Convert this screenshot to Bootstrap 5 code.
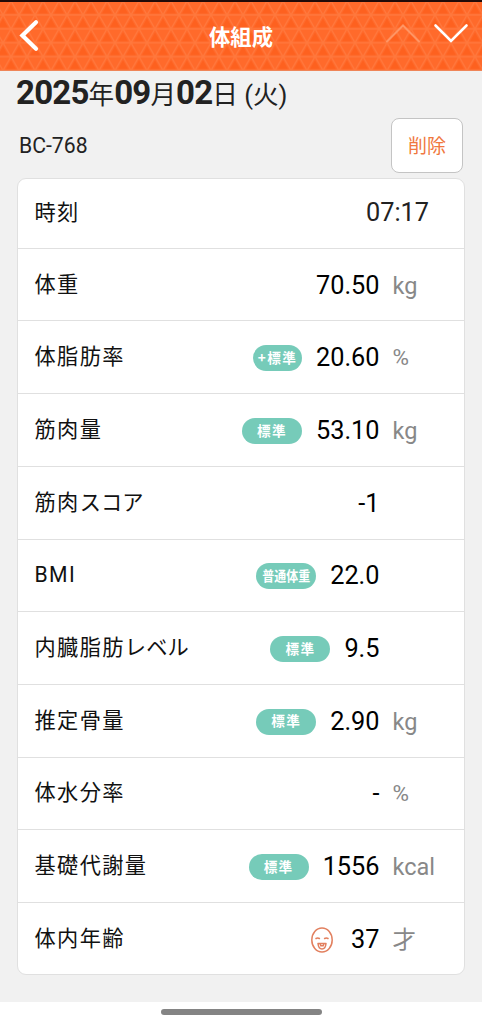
<!DOCTYPE html>
<html lang="ja">
<head>
<meta charset="utf-8">
<meta name="viewport" content="width=device-width, initial-scale=1">
<title>体組成</title>
<link href="https://cdn.jsdelivr.net/npm/bootstrap@5.3.0/dist/css/bootstrap.min.css" rel="stylesheet">
<style>
  body { font-family: Roboto, "Noto Sans CJK JP", sans-serif; background: #f1f1f1; color: #222; height: 1024px; overflow: hidden; }
  .topbar { height: 71px; border-top: 2px solid #210b08; border-bottom: 1px solid #ef8558; background: #ff6a2b; }
  .topbar-title { font-size: 21.3px; line-height: 1; color: #fff; }
  .date-row { height: 47px; padding: 3px 0 0 16px; font-size: 25.6px; line-height: 40px; }
  .date-row b { font-size: 33px; line-height: 38px; font-weight: 700; letter-spacing: -.8px; }
  .device-row { height: 59.5px; padding: 0 19px; }
  .device { font-size: 21.2px; line-height: 55px; }
  .btn-del { width: 72px; height: 55px; padding: 4px 0 0; border: 1.5px solid #c4c4c4; border-radius: 8px; background: #fff; color: #f07840; font-size: 19px; }
  .measures { margin: 0 17px; border: 1.5px solid #e0e0e0; border-radius: 9px; --bs-list-group-border-radius: 9px; background: #fff; }
  .measure { height: 72.7px; padding: 2px 0 0 16.5px; border: 0; border-bottom: 1.5px solid #e0e0e0; background: transparent; color: #000; }
  .measure:first-child { height: 70.3px; padding-top: 0; }
  .measure:last-child { border-bottom: 0; height: 71.2px; }
  .m-label { font-size: 21.2px; letter-spacing: 1.4px; line-height: 30px; margin-bottom: 2px; color: #111; }
  .measure:first-child .m-label { margin-bottom: 0; }
  .kana { letter-spacing: .1px; }
  .m-value { font-size: 25.3px; line-height: 30px; }
  .m-unit { width: 71.5px; margin-left: 13px; font-size: 23.5px; line-height: 30px; color: #888; }
  .m-unit.pct { font-size: 22.5px; margin-bottom: 2px; }
  .time { margin-right: 35px; color: #222; }
  .rating { width: 60px; height: 26px; padding: 0 0 1px; margin-right: 14px; border-radius: 13px; background: #76cbb9; color: #fff; font: bold 13.6px/1 "Noto Sans CJK JP", sans-serif; letter-spacing: 1.4px; }
  .rating.plus { width: 49px; }
  .rating.narrow { letter-spacing: 0; }
  .rating.narrow span { transform: scaleX(.88); white-space: nowrap; }
  .face { margin-right: 17px; }
  .homebar { height: 22px; background: #fff; }
  .homebar div { width: 161px; height: 6px; margin-bottom: 2px; background: #848484; }
</style>
</head>
<body class="d-flex flex-column">
<header class="topbar position-relative flex-shrink-0">
  <svg class="d-block position-absolute top-0 start-0" width="482" height="68">
    <defs>
      <pattern id="tri" width="16" height="27.8" patternUnits="userSpaceOnUse" patternTransform="translate(3 -1)">
        <path d="M8 3.5l5 8.8H3zM0 17.4l5 8.8H0zM16 17.4v8.8h-5z" fill="#fe611f"/>
        <path d="M0 0H16M0 13.9H16M0 27.8H16M0 13.9L8 0L16 13.9M0 13.9L8 27.8L16 13.9" fill="none" stroke="#ff783d" stroke-width="1.3"/>
      </pattern>
    </defs>
    <rect width="482" height="68" fill="url(#tri)"/>
  </svg>
  <svg class="position-absolute top-0 start-0" width="482" height="68" fill="none" stroke="#fff" stroke-linecap="round">
    <path d="M36 20.3L22.4 33.5L36 46.7" stroke-width="4.2"/>
    <path d="M387 39.5L403 23.5L419 39.5" stroke="#ff9564" stroke-width="2"/>
    <path d="M435.5 23.5L451 39L466.5 23.5" stroke-width="2.6"/>
  </svg>
  <div class="position-relative h-100 d-flex justify-content-center align-items-center pt-1">
    <h1 class="topbar-title fw-bold mb-0 pt-1 pb-1">体組成</h1>
  </div>
</header>
<main class="flex-grow-1">
  <div class="date-row"><b>2025</b>年<b>09</b>月<b>02</b>日 (火)</div>
  <div class="device-row d-flex justify-content-between">
    <span class="device">BC-768</span>
    <button class="btn btn-del" type="button">削除</button>
  </div>
  <ul class="list-group measures">
    <li class="list-group-item measure d-flex align-items-center"><span class="m-label me-auto">時刻</span><span class="m-value time">07:17</span></li>
    <li class="list-group-item measure d-flex align-items-center"><span class="m-label me-auto">体重</span><span class="m-value">70.50</span><span class="m-unit">kg</span></li>
    <li class="list-group-item measure d-flex align-items-center"><span class="m-label me-auto">体脂肪率</span><span class="rating plus d-flex align-items-center justify-content-center">+標準</span><span class="m-value">20.60</span><span class="m-unit pct">%</span></li>
    <li class="list-group-item measure d-flex align-items-center"><span class="m-label me-auto">筋肉量</span><span class="rating d-flex align-items-center justify-content-center">標準</span><span class="m-value">53.10</span><span class="m-unit">kg</span></li>
    <li class="list-group-item measure d-flex align-items-center"><span class="m-label me-auto">筋肉<span class="kana">スコア</span></span><span class="m-value">-1</span><span class="m-unit"></span></li>
    <li class="list-group-item measure d-flex align-items-center"><span class="m-label me-auto">BMI</span><span class="rating narrow d-flex align-items-center justify-content-center"><span>普通体重</span></span><span class="m-value">22.0</span><span class="m-unit"></span></li>
    <li class="list-group-item measure d-flex align-items-center"><span class="m-label me-auto">内臓脂肪<span class="kana">レベル</span></span><span class="rating d-flex align-items-center justify-content-center">標準</span><span class="m-value">9.5</span><span class="m-unit"></span></li>
    <li class="list-group-item measure d-flex align-items-center"><span class="m-label me-auto">推定骨量</span><span class="rating d-flex align-items-center justify-content-center">標準</span><span class="m-value">2.90</span><span class="m-unit">kg</span></li>
    <li class="list-group-item measure d-flex align-items-center"><span class="m-label me-auto">体水分率</span><span class="m-value">-</span><span class="m-unit pct">%</span></li>
    <li class="list-group-item measure d-flex align-items-center"><span class="m-label me-auto">基礎代謝量</span><span class="rating d-flex align-items-center justify-content-center">標準</span><span class="m-value">1556</span><span class="m-unit">kcal</span></li>
    <li class="list-group-item measure d-flex align-items-center"><span class="m-label me-auto">体内年齢</span>
      <svg class="face" width="24" height="28" viewBox="0 0 24 28" fill="none" stroke="#e2805f" stroke-width="1.5" stroke-linecap="round" stroke-linejoin="round"><ellipse cx="12" cy="14" rx="10.2" ry="12"/><path d="M6 12.5Q7.7 11.4 9.4 12.5M14.6 12.5Q16.3 11.4 18 12.5M8 17.5H16Q15.5 23 12 23T8 17.5ZM10.2 18L10.8 19.8H13.2L13.8 18"/></svg>
      <span class="m-value">37</span><span class="m-unit">才</span></li>
  </ul>
</main>
<footer class="homebar flex-shrink-0 d-flex justify-content-center align-items-center"><div class="rounded-pill"></div></footer>
<script src="https://cdn.jsdelivr.net/npm/bootstrap@5.3.0/dist/js/bootstrap.bundle.min.js"></script>
</body>
</html>
